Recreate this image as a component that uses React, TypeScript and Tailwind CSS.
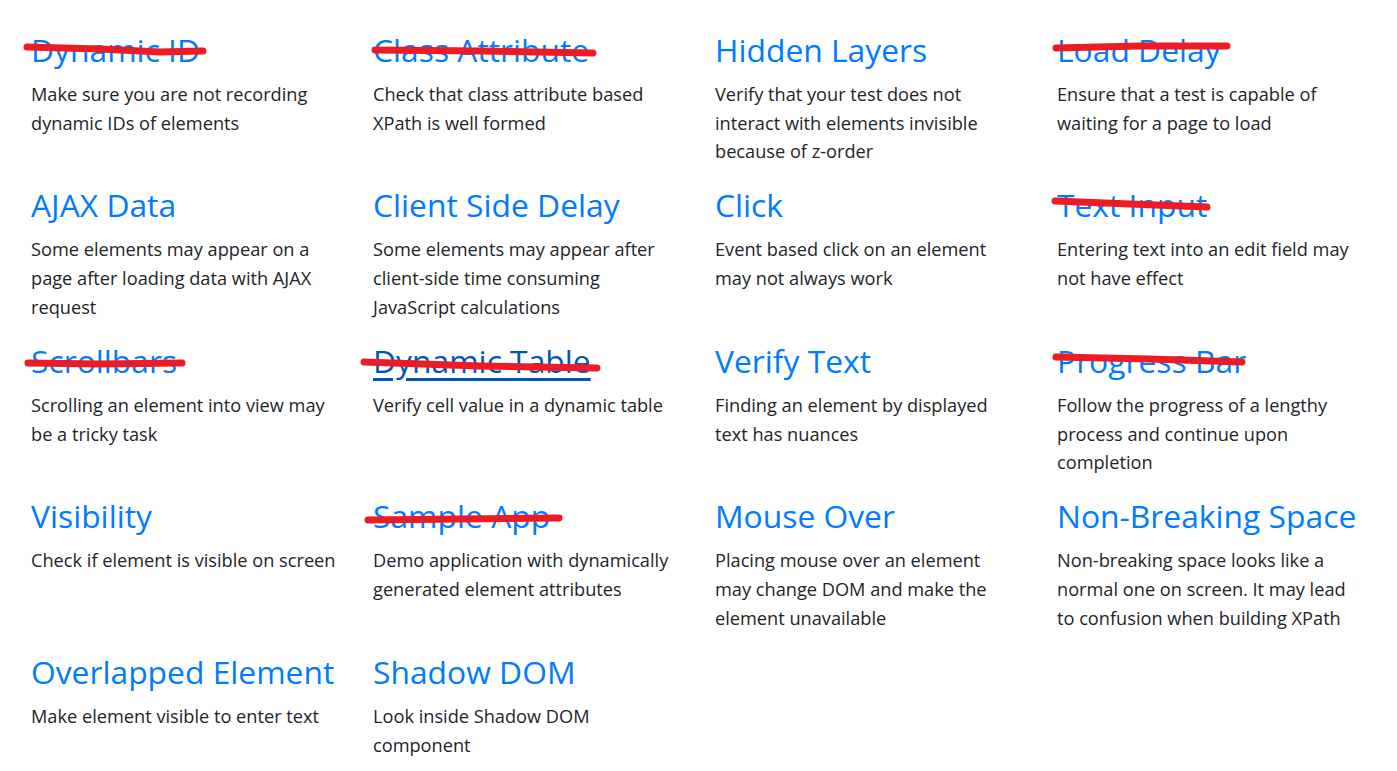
import React from "react";

type Item = { title: string; lines: string[]; hovered?: boolean };

const items: Item[] = [
  { title: "Dynamic ID", lines: ["Make sure you are not recording", "dynamic IDs of elements"] },
  { title: "Class Attribute", lines: ["Check that class attribute based", "XPath is well formed"] },
  { title: "Hidden Layers", lines: ["Verify that your test does not", "interact with elements invisible", "because of z-order"] },
  { title: "Load Delay", lines: ["Ensure that a test is capable of", "waiting for a page to load"] },
  { title: "AJAX Data", lines: ["Some elements may appear on a", "page after loading data with AJAX", "request"] },
  { title: "Client Side Delay", lines: ["Some elements may appear after", "client-side time consuming", "JavaScript calculations"] },
  { title: "Click", lines: ["Event based click on an element", "may not always work"] },
  { title: "Text Input", lines: ["Entering text into an edit field may", "not have effect"] },
  { title: "Scrollbars", lines: ["Scrolling an element into view may", "be a tricky task"] },
  { title: "Dynamic Table", lines: ["Verify cell value in a dynamic table"], hovered: true },
  { title: "Verify Text", lines: ["Finding an element by displayed", "text has nuances"] },
  { title: "Progress Bar", lines: ["Follow the progress of a lengthy", "process and continue upon", "completion"] },
  { title: "Visibility", lines: ["Check if element is visible on screen"] },
  { title: "Sample App", lines: ["Demo application with dynamically", "generated element attributes"] },
  { title: "Mouse Over", lines: ["Placing mouse over an element", "may change DOM and make the", "element unavailable"] },
  { title: "Non-Breaking Space", lines: ["Non-breaking space looks like a", "normal one on screen. It may lead", "to confusion when building XPath"] },
  { title: "Overlapped Element", lines: ["Make element visible to enter text"] },
  { title: "Shadow DOM", lines: ["Look inside Shadow DOM", "component"] },
];

// hand-drawn marker strokes over finished tasks
const strokes = [
  "M27 47 L100 49 L160 52 L203 51",
  "M375 50 L480 51 L593 53",
  "M1056 48 L1140 46 L1227 46",
  "M1055 201 L1130 204 L1207 207",
  "M28 363 L100 364 L182 363",
  "M364 362 L480 366 L597 368",
  "M1056 357 L1150 359 L1242 362",
  "M368 520 L460 519 L559 518",
];

const Card: React.FC<{ item: Item }> = ({ item }) => (
  <div className="px-[14.5px]">
    <h3 className="mb-[9.6px] whitespace-nowrap text-[31.8px] leading-[40.3px]">
      <a
        href="#"
        className={item.hovered ? "text-[#0056b3] underline underline-offset-[5px]" : "text-[#007bff]"}
      >
        {item.title}
      </a>
    </h3>
    <p className="mb-[19.2px] text-[18.2px] leading-[28.8px] text-[#212529]">
      {item.lines.map((l, i) => (
        <span key={i} className="block whitespace-nowrap">
          {l}
        </span>
      ))}
    </p>
  </div>
);

export default function App() {
  return (
    <div className="relative min-h-[771px] bg-white font-['Segoe_UI','Open_Sans',sans-serif]">
      <div className="grid grid-cols-4 pl-[16.5px] pr-[12.5px] pt-[30px]">
        {items.map((it) => (
          <Card key={it.title} item={it} />
        ))}
      </div>
      <svg className="pointer-events-none absolute left-0 top-0" width="1397" height="771">
        {strokes.map((d, i) => (
          <path key={i} d={d} fill="none" stroke="#ed1c24" strokeWidth="7" strokeLinecap="round" strokeLinejoin="round" />
        ))}
      </svg>
    </div>
  );
}
